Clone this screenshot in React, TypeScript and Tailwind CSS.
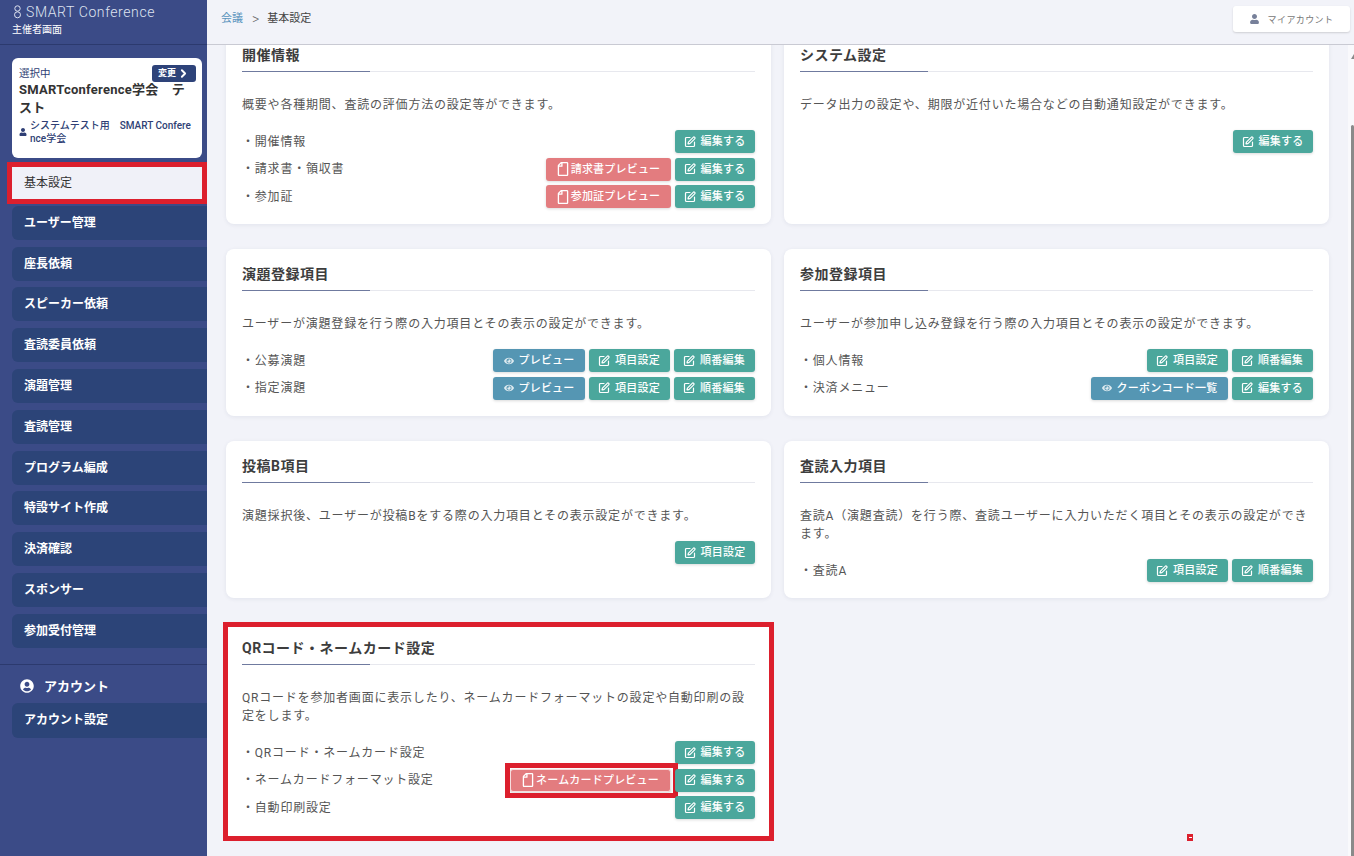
import React from 'react';
import { FaEye, FaRegFile, FaUser, FaUserCircle } from 'react-icons/fa';
import { ChevronRight, SquarePen } from 'lucide-react';

const navItems = ['ユーザー管理', '座長依頼', 'スピーカー依頼', '査読委員依頼', '演題管理', '査読管理', 'プログラム編成', '特設サイト作成', '決済確認', 'スポンサー', '参加受付管理'];

type Btn = { label: string; kind: 'edit' | 'pink' | 'blue'; w: string; boxed?: boolean };
type Row = { label: string; buttons: Btn[] };

const edit: Btn = { label: '編集する', kind: 'edit', w: 'w-[80px]' };
const items: Btn = { label: '項目設定', kind: 'edit', w: 'w-[81px]' };
const order: Btn = { label: '順番編集', kind: 'edit', w: 'w-[81px]' };
const preview: Btn = { label: 'プレビュー', kind: 'blue', w: 'w-[92px]' };

const ActionButton = ({ b }: { b: Btn }) => {
  const color = b.kind === 'edit' ? 'bg-[#4ba79c]' : b.kind === 'pink' ? 'bg-[#e37c7f]' : 'bg-[#5596b3]';
  return (
    <div className="relative">
      <button className={`${b.w} ${color} ${b.boxed ? 'border border-[#f6dede]' : ''} h-[23px] rounded-[3px] shadow-[0_1px_3px_rgba(0,0,0,0.15)] flex items-center justify-center gap-[5px] text-[11px] font-medium text-white`}>
        {b.kind === 'edit' && <SquarePen className="w-[12px] h-[12px] -ml-[1px]" strokeWidth={2.4} />}
        {b.kind === 'blue' && <FaEye className="w-[10px] h-[10px] opacity-80" />}
        {b.kind === 'pink' && <FaRegFile className="w-[12px] h-[14px] -scale-x-100 -mr-[3px]" />}
        <span className="tracking-[0.2px] mt-[2px]">{b.label}</span>
      </button>
      {b.boxed && <div className="absolute -left-[5px] -right-[7px] -top-[6px] -bottom-[6px] border-[5px] border-[#dc1f2d]" />}
    </div>
  );
};

const Card = ({ title, desc, rows, h, boxed = false }: { title: string; desc: React.ReactNode; rows: Row[]; h: string; boxed?: boolean }) => (
  <div className={`${h} relative bg-white rounded-lg shadow-[0_1px_4px_rgba(40,50,90,0.08)] px-4 pt-4`}>
    <div className="relative h-[26px] border-b border-[#e7e8ee]">
      <h2 className="text-[14px] leading-[18px] font-bold text-[#3d3d3d] tracking-[0.5px]">{title}</h2>
      <div className="absolute left-0 -bottom-px w-[128px] h-px bg-[#6f7a9f]" />
    </div>
    <p className="mt-[24px] text-[12px] leading-[18px] text-[#555] tracking-[0.8px]">{desc}</p>
    <div className="mt-[16px] flex flex-col gap-[4.5px]">
      {rows.map((r, i) => (
        <div key={i} className="flex items-center justify-between h-[23px]">
          <span className="text-[12px] text-[#555] tracking-[0.8px]">{r.label && `・${r.label}`}</span>
          <div className="flex gap-[4px]">
            {r.buttons.map((b, j) => <ActionButton key={j} b={b} />)}
          </div>
        </div>
      ))}
    </div>
    {boxed && <div className="absolute -left-[3px] -right-[3px] -top-[1px] -bottom-[3px] border-[5px] border-[#dc1f2d]" />}
  </div>
);

const App: React.FC = () => {
  return (
    <div className="relative flex h-[856px] w-[1354px] overflow-hidden bg-[#f2f3f9] font-['Roboto','Noto_Sans_CJK_JP',sans-serif]">
      <aside className="w-[207px] shrink-0 bg-[#3b4b87] text-white">
        <div className="h-[45px] border-b border-[#2c3a6e] pl-[14px] pt-[3px]">
          <div className="flex items-center gap-[5px] text-[14px] leading-[18px] font-light text-[#dfe3f0] tracking-[0.6px]">
            <svg width="7" height="14" viewBox="0 0 7 14" fill="none" stroke="#dfe3f0" strokeWidth="1"><circle cx="3.5" cy="3.5" r="2.7" /><circle cx="3.5" cy="9.8" r="3" /></svg>
            SMART Conference
          </div>
          <div className="text-[10px] leading-[14px] mt-[2px] -ml-[2px]">主催者画面</div>
        </div>
        <div className="ml-[12px] mr-[5px] mt-[13px] h-[100px] rounded-md bg-white px-[7px] pt-[8px] text-[#2f3f75]">
          <div className="flex items-start justify-between">
            <span className="text-[10.5px] leading-[15px]">選択中</span>
            <span className="flex items-center bg-[#2e4379] text-white text-[9px] font-bold rounded-[3px] h-[17px] w-[44px] justify-center mr-[-1px] mt-[-1px]">変更<ChevronRight className="w-[13px] h-[13px] ml-[1px]" strokeWidth={3.5} /></span>
          </div>
          <div className="text-[13px] leading-[18px] font-bold text-[#333] tracking-[0.25px] mt-[-1px]">SMARTconference学会　テスト</div>
          <div className="flex items-center gap-[3px] mt-[2px]">
            <FaUser className="w-[8px] h-[8px] shrink-0" />
            <span className="text-[10px] leading-[13px] font-medium break-all">システムテスト用　SMART Conference学会</span>
          </div>
        </div>
        <nav className="mt-[9px] ml-[12px] flex flex-col gap-[6.8px]">
          <div className="h-[32px] mr-[5px] bg-[#f0f1f8] pl-[12px] flex items-center text-[12px] text-[#333] outline-[5px] outline-[#dc1f2d]">基本設定</div>
          {navItems.map(n => (
            <div key={n} className="h-[34px] rounded-l-md bg-[#2c4478] pl-[12px] flex items-center text-[12px] font-bold">{n}</div>
          ))}
        </nav>
        <div className="mt-[16px] border-t border-[#2c3a6e] pt-[13px]">
          <div className="flex items-center pl-[20px] gap-[10px] text-[13px] font-bold h-[17px]"><FaUserCircle className="w-[14px] h-[14px]" />アカウント</div>
          <div className="mt-[8px] ml-[12px] h-[35px] rounded-l-md bg-[#2c4478] pl-[12px] flex items-center text-[12px] font-bold">アカウント設定</div>
        </div>
      </aside>
      <div className="flex-1 flex flex-col min-w-0">
        <header className="h-[45px] shrink-0 bg-[#f2f3f9] border-b border-[#c9cad3] flex items-center justify-between pl-[14px] pr-[4px] relative z-10">
          <div className="flex items-center text-[11px] -mt-[6px]">
            <span className="text-[#5b93bd]">会議</span>
            <span className="ml-[9px] mr-[8px] text-[#666] text-[14px] font-light">&gt;</span>
            <span className="text-[#444]">基本設定</span>
          </div>
          <div className="w-[117px] h-[26px] -mt-[6px] bg-white rounded-[3px] shadow-[0_1px_2px_rgba(0,0,0,0.15)] flex items-center justify-center gap-[9px] text-[9px] text-[#777] tracking-[0.4px]">
            <FaUser className="w-[9px] h-[10px] text-[#77809a]" /><span className="mt-[3px]">マイアカウント</span>
          </div>
        </header>
        <main className="flex-1 overflow-hidden flex">
          <div className="w-[1140px] pl-[19px] shrink-0">
            <div className="grid grid-cols-[545px_545px] gap-x-[13px] gap-y-[25px] -mt-[15px]">
              <Card h="h-[194px]" title="開催情報" desc="概要や各種期間、査読の評価方法の設定等ができます。" rows={[
                { label: '開催情報', buttons: [edit] },
                { label: '請求書・領収書', buttons: [{ label: '請求書プレビュー', kind: 'pink', w: 'w-[125px]' }, edit] },
                { label: '参加証', buttons: [{ label: '参加証プレビュー', kind: 'pink', w: 'w-[125px]' }, edit] },
              ]} />
              <Card h="h-[194px]" title="システム設定" desc="データ出力の設定や、期限が近付いた場合などの自動通知設定ができます。" rows={[
                { label: '', buttons: [edit] },
              ]} />
              <Card h="h-[167px]" title="演題登録項目" desc="ユーザーが演題登録を行う際の入力項目とその表示の設定ができます。" rows={[
                { label: '公募演題', buttons: [preview, items, order] },
                { label: '指定演題', buttons: [preview, items, order] },
              ]} />
              <Card h="h-[167px]" title="参加登録項目" desc="ユーザーが参加申し込み登録を行う際の入力項目とその表示の設定ができます。" rows={[
                { label: '個人情報', buttons: [items, order] },
                { label: '決済メニュー', buttons: [{ label: 'クーポンコード一覧', kind: 'blue', w: 'w-[137px]' }, { ...edit, w: 'w-[81px]' }] },
              ]} />
              <Card h="h-[157px]" title="投稿B項目" desc="演題採択後、ユーザーが投稿Bをする際の入力項目とその表示設定ができます。" rows={[
                { label: '', buttons: [{ ...items, w: 'w-[80px]' }] },
              ]} />
              <Card h="h-[157px]" title="査読入力項目" desc="査読A（演題査読）を行う際、査読ユーザーに入力いただく項目とその表示の設定ができます。" rows={[
                { label: '査読A', buttons: [items, order] },
              ]} />
              <Card boxed h="h-[215px]" title="QRコード・ネームカード設定" desc="QRコードを参加者画面に表示したり、ネームカードフォーマットの設定や自動印刷の設定をします。" rows={[
                { label: 'QRコード・ネームカード設定', buttons: [edit] },
                { label: 'ネームカードフォーマット設定', buttons: [{ label: 'ネームカードプレビュー', kind: 'pink', w: 'w-[161px]', boxed: true }, edit] },
                { label: '自動印刷設定', buttons: [edit] },
              ]} />
            </div>
          </div>
        </main>
      </div>
      {/* scrollbar */}
      <div className="absolute right-0 top-[45px] bottom-0 w-[6px] bg-[#f9f9fc]">
        <div className="ml-[3px] mt-[9px] w-0 h-0 border-l-[3px] border-r-0 border-b-[5px] border-l-transparent border-b-[#8a8a8a]" />
        <div className="mt-[66px] ml-[3px] h-full bg-[#8a8a8a] rounded-t-sm" />
      </div>
      <div className="absolute left-[1187px] top-[834px] w-[6px] h-[7px] bg-[#dc1f2d] flex items-center justify-center"><div className="w-[3px] h-px bg-white" /></div>
    </div>
  );
};

export default App;
